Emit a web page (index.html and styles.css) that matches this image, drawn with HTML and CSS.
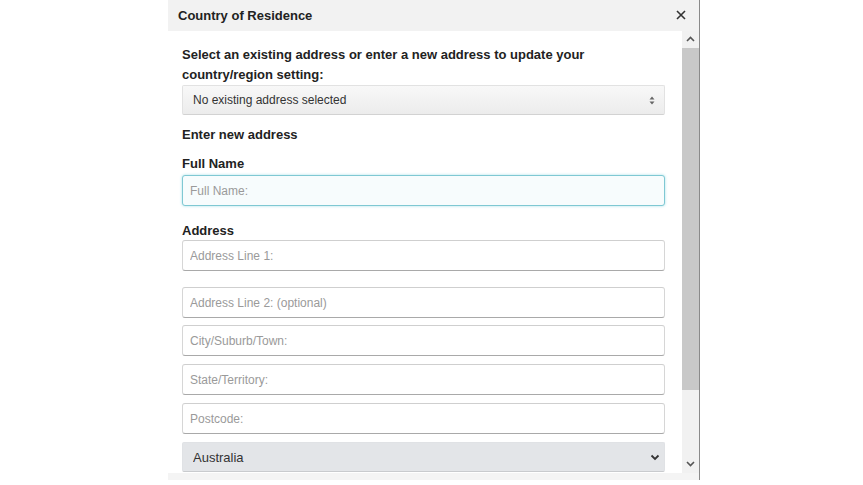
FILE: index.html
```html
<!DOCTYPE html>
<html lang="en">
<head>
    <meta charset="UTF-8">
    <meta name="viewport" content="width=device-width, initial-scale=1.0">
    <title>Country of Residence</title>
    <link rel="stylesheet" href="styles.css">
</head>
<body>

    <div class="dialog">
        <div class="dialog-header">
            <span class="dialog-title">Country of Residence</span>
            <svg class="close-icon" width="10" height="10" viewBox="0 0 10 10">
                <path d="M1 1 L9 9 M9 1 L1 9" stroke="#333" stroke-width="1.6" fill="none"/>
            </svg>
        </div>

        <div class="dialog-body">
            <div class="content">
                <p class="intro">Select an existing address or enter a new address to update your country/region setting:</p>

                <div class="select-wrap">
                    <select class="select-light">
                        <option>No existing address selected</option>
                    </select>
                    <svg class="select-icon" width="6" height="9" viewBox="0 0 6 9">
                        <path d="M0.5 3.5 L3 0.5 L5.5 3.5 Z M0.5 5.5 L3 8.5 L5.5 5.5 Z" fill="#666"/>
                    </svg>
                </div>

                <h3 class="section-title">Enter new address</h3>

                <label class="field-label label-name" for="fullName">Full Name</label>
                <input type="text" id="fullName" class="field focused" placeholder="Full Name:">

                <label class="field-label label-address" for="line1">Address</label>
                <input type="text" id="line1" class="field" placeholder="Address Line 1:">
                <input type="text" class="field gap-lg" placeholder="Address Line 2: (optional)">
                <input type="text" class="field gap-sm" placeholder="City/Suburb/Town:">
                <input type="text" class="field gap" placeholder="State/Territory:">
                <input type="text" class="field gap" placeholder="Postcode:">

                <div class="select-wrap gap">
                    <select class="select-dark">
                        <option>Australia</option>
                    </select>
                    <svg class="select-icon chevron" width="10" height="7" viewBox="0 0 10 7">
                        <path d="M1.5 1.5 L5 5 L8.5 1.5" stroke="#333" stroke-width="1.8" fill="none"/>
                    </svg>
                </div>
            </div>

            <div class="scrollbar">
                <svg class="scroll-arrow" width="9" height="6" viewBox="0 0 9 6">
                    <path d="M1 5 L4.5 1.5 L8 5" stroke="#555" stroke-width="1.6" fill="none"/>
                </svg>
                <div class="scroll-thumb"></div>
                <div class="scroll-track"></div>
                <svg class="scroll-arrow" width="9" height="6" viewBox="0 0 9 6">
                    <path d="M1 1 L4.5 4.5 L8 1" stroke="#555" stroke-width="1.6" fill="none"/>
                </svg>
            </div>
        </div>

        <div class="dialog-footer"></div>
    </div>

</body>
</html>
```

FILE: styles.css
```css
body {
    margin: 0;
    padding: 0;
    background-color: white;
    font-family: "Liberation Sans", Arial, sans-serif;
    color: #222;
}

.dialog {
    width: 531px;
    margin-left: 168px;
    border-right: 1px solid #8a8a8a;
    background-color: white;
}

.dialog-header {
    height: 30px;
    background-color: #f2f2f2;
    display: flex;
    align-items: center;
    justify-content: space-between;
    padding: 0 13px 1px 10px;
}

.dialog-title {
    font-size: 13px;
    font-weight: bold;
    color: #222;
}

.dialog-body {
    display: flex;
    height: 442px;
}

.content {
    flex: 1;
    padding: 14px 17px 0 14px;
    display: flex;
    flex-direction: column;
    overflow: hidden;
}

.intro {
    margin: 0;
    font-size: 13px;
    font-weight: bold;
    line-height: 20px;
    color: #222;
}

.select-wrap {
    position: relative;
}

.select-wrap select {
    appearance: none;
    -webkit-appearance: none;
    width: 100%;
    height: 30px;
    padding: 0 10px;
    font-family: "Liberation Sans", Arial, sans-serif;
    font-size: 12px;
    color: #333;
    border-radius: 2px;
    outline: none;
}

.select-light {
    background: linear-gradient(#f8f8f8, #ececec);
    border: 1px solid #e2e2e2;
    border-bottom-color: #d2d2d2;
}

.select-dark {
    background-color: #e3e5e8;
    border: 1px solid #e0e2e5;
    border-bottom-color: #c9cbce;
    font-size: 13px !important;
}

.select-icon {
    position: absolute;
    right: 10px;
    top: 11px;
}

.select-icon.chevron {
    right: 5px;
    top: 12px;
}

.section-title {
    margin: 11px 0 0 0;
    font-size: 13px;
    font-weight: bold;
    line-height: 18px;
}

.field-label {
    font-size: 13px;
    font-weight: bold;
    line-height: 18px;
}

.label-name {
    margin-top: 11px;
}

.label-address {
    margin-top: 16px;
}

.field {
    box-sizing: border-box;
    width: 100%;
    height: 31px;
    margin-top: 0;
    padding: 0 7px;
    font-family: "Liberation Sans", Arial, sans-serif;
    font-size: 12px;
    color: #333;
    background-color: white;
    border: 1px solid #d6d6d6;
    border-top-color: #cfcfcf;
    border-bottom-color: #a9a9a9;
    border-radius: 3px;
    outline: none;
}

.field::placeholder {
    color: #9a9a9a;
}

.field.focused {
    margin-top: 2px;
    background-color: #f7fcfd;
    border: 1px solid #7fc8d3;
    box-shadow: 0 0 3px #a6dfe7;
}

.gap-lg {
    margin-top: 16px;
}

.gap-sm {
    margin-top: 7px;
}

.gap {
    margin-top: 8px;
}

.scrollbar {
    width: 17px;
    background-color: #f1f1f1;
    display: flex;
    flex-direction: column;
    align-items: center;
}

.scroll-arrow {
    flex-shrink: 0;
    margin: 5px 0 6px;
}

.scroll-thumb {
    width: 100%;
    height: 342px;
    background-color: #c8c8c8;
}

.scroll-track {
    flex: 1;
}

.dialog-footer {
    height: 7px;
    background-color: #f4f4f4;
}
```
